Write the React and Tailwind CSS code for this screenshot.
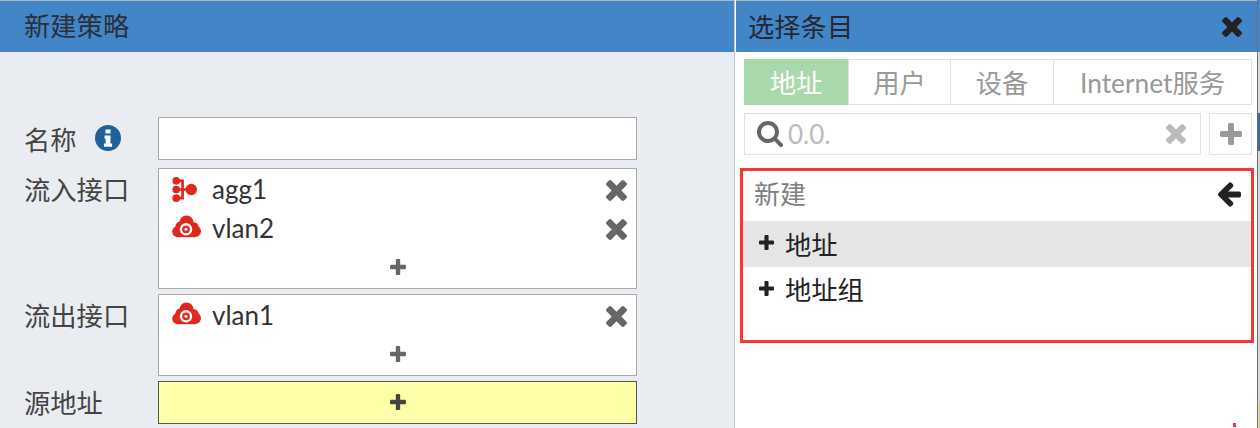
// font-awesome 4 glyphs, the package versions are a different, thinner cut
const TIMES = "M1298 1322q0 40-28 68l-136 136q-28 28-68 28t-68-28l-294-294-294 294q-28 28-68 28t-68-28l-136-136q-28-28-28-68t28-68l294-294-294-294q-28-28-28-68t28-68l136-136q28-28 68-28t68 28l294 294 294-294q28-28 68-28t68 28l136 136q28 28 28 68t-28 68l-294 294 294 294q28 28 28 68z";
const PLUS = "M1408 736v192q0 40-28 68t-68 28h-416v416q0 40-28 68t-68 28h-192q-40 0-68-28t-28-68v-416h-416q-40 0-68-28t-28-68v-192q0-40 28-68t68-28h416v-416q0-40 28-68t68-28h192q40 0 68 28t28 68v416h416q40 0 68 28t28 68z";
const ARROW = "M1536 832v128q0 53-32.5 90.5t-84.5 37.5h-704l293 294q38 36 38 90t-38 90l-75 76q-37 37-90 37-52 0-91-37l-651-652q-37-37-37-90 0-52 37-91l651-650q38-38 91-38 52 0 90 38l75 74q38 38 38 91t-38 91l-293 293h704q52 0 84.5 37.5t32.5 90.5z";
const SEARCH = "M1152 832q0-185-131.5-316.5t-316.5-131.5-316.5 131.5-131.5 316.5 131.5 316.5 316.5 131.5 316.5-131.5 131.5-316.5zm512 832q0 52-38 90t-90 38q-54 0-90-38l-343-342q-179 124-399 124-143 0-273.5-55.5t-225-150-150-225-55.5-273.5 55.5-273.5 150-225 225-150 273.5-55.5 273.5 55.5 225 150 150 225 55.5 273.5q0 220-124 399l343 343q37 37 37 90z";

function Glyph({ d, box, className }) {
    return (
        <svg viewBox={box} className={className} fill="currentColor">
            <path d={d} />
        </svg>
    );
}

const TimesIcon = ({ className }) => <Glyph d={TIMES} box="110 366 1188 1188" className={className} />;
const PlusIcon = ({ className }) => <Glyph d={PLUS} box="0 128 1408 1408" className={className} />;

function InfoIcon() {
    return (
        <svg viewBox="0 0 26 26" className="ml-[18px] -mt-[2px] w-[26px] h-[26px]">
            <circle cx="13" cy="13" r="13" fill="#1f6298" />
            <path d="M10.5 4.5h5v4h-5zM9.5 10.5h6v8h1.6v3.2H9v-3.2h1.7v-4.8H9.5z" fill="#fff" />
        </svg>
    );
}

function TreeIcon() {
    return (
        <svg viewBox="0 0 26 26" className="-mt-[3px] w-[25px] h-[25px] text-[#e0281e]" fill="currentColor">
            <circle cx="4.4" cy="4" r="4" />
            <circle cx="4.4" cy="13" r="4" />
            <circle cx="4.4" cy="22" r="4" />
            <circle cx="20" cy="13" r="6" />
            <path d="M4 2.6h8.4v9H16v2.8h-3.6v9H4v-2.8h5.6v-6.2H4v-2.8h5.6V5.4H4z" />
        </svg>
    );
}

function CloudIcon() {
    return (
        <svg viewBox="0 0 30 23" className="-mt-[6px] w-[29px] h-[23px] text-[#e0281e]" fill="currentColor">
            <circle cx="15" cy="7.4" r="7.2" />
            <circle cx="8.6" cy="11.4" r="5" />
            <circle cx="22" cy="12.4" r="5.6" />
            <circle cx="6" cy="16.8" r="5.8" />
            <circle cx="24" cy="16.4" r="6" />
            <rect x="6" y="12" width="18" height="10.6" />
            <circle cx="14.5" cy="14.4" r="6.4" fill="#fff" />
            <circle cx="14.5" cy="14.4" r="4" fill="#e0281e" />
            <circle cx="14.5" cy="14.4" r="1.6" fill="#fff" />
        </svg>
    );
}

function Chip({ icon, name }) {
    return (
        <div className="flex items-center h-[39px] pl-[13px] pr-[9px]">
            <div className="w-[40px] flex items-center">{icon}</div>
            <span className="text-[26px] text-[#333] leading-none -mt-[4px]">{name}</span>
            <TimesIcon className="ml-auto text-[#666] w-[21px] h-[21px]" />
        </div>
    );
}

function AddRow({ className }) {
    return (
        <div className={`flex justify-center ${className}`}>
            <PlusIcon className="text-[#666] w-[16px] h-[16px]" />
        </div>
    );
}

function Row({ label, info, className, children }) {
    return (
        <div className={`flex ${className}`}>
            <div className="w-[158px] pl-[24px] flex items-center h-[44px] text-[26.3px] text-[#444]">
                <span className={info ? "pt-[3px]" : "pt-[2px]"}>{label}</span>
                {info && <InfoIcon />}
            </div>
            <div className="w-[479px]">{children}</div>
        </div>
    );
}

export default function App() {
    return (
        <div className="relative w-[1260px] h-[428px] overflow-hidden flex bg-white font-['Lato','Noto_Sans_CJK_SC',sans-serif]">
            {/* left panel */}
            <div className="w-[734px] h-full bg-[#e9ecf0] flex flex-col">
                <div className="h-[52px] bg-[#4286c8] border-t border-[#b5b5b5] pl-[24px] flex items-center text-[26.3px] text-[#2b2f3a]">
                    新建策略
                </div>
                <div className="pt-[65px] flex flex-col">
                    <Row label="名称" info>
                        <div className="h-[43px] bg-white border border-[#aaa]" />
                    </Row>
                    <Row label="流入接口" className="mt-[7px]">
                        <div className="h-[121px] bg-white border border-[#aaa] pt-[2px]">
                            <Chip icon={<TreeIcon />} name="agg1" />
                            <Chip icon={<CloudIcon />} name="vlan2" />
                            <AddRow className="mt-[10px]" />
                        </div>
                    </Row>
                    <Row label="流出接口" className="mt-[5px]">
                        <div className="h-[82px] bg-white border border-[#aaa] pt-[2px]">
                            <Chip icon={<CloudIcon />} name="vlan1" />
                            <AddRow className="mt-[10px]" />
                        </div>
                    </Row>
                    <Row label="源地址" className="mt-[5px]">
                        <div className="h-[43px] bg-[#ffffa8] border border-[#555] flex items-center justify-center">
                            <PlusIcon className="text-[#444] w-[16px] h-[16px] -mt-[2px]" />
                        </div>
                    </Row>
                </div>
            </div>

            {/* right panel */}
            <div className="w-[2px] h-full flex flex-col">
                <div className="w-[1px] h-full bg-[#c4c7cc]" />
            </div>
            <div className="w-[521px] h-full flex flex-col">
                <div className="h-[52px] bg-[#4286c8] border-t border-[#b5b5b5] pl-[12px] pr-[12px] flex items-center justify-between text-[26.3px] text-[#26282e]">
                    <span className="mt-[2px]">选择条目</span>
                    <TimesIcon className="text-[#222] w-[20px] h-[20px] mr-[3px]" />
                </div>
                <div className="pl-[8px] pr-[5px] pt-[7px]">
                    <div className="h-[46px] flex border border-[#e2e2e2] text-[26.3px] text-[#999]">
                        <div className="w-[104px] -ml-px -my-px bg-[#a8d8ab] text-white flex items-center justify-center pt-[3px]">地址</div>
                        <div className="w-[102px] border-l border-[#e2e2e2] flex items-center justify-center pt-[3px]">用户</div>
                        <div className="w-[103px] border-l border-[#e2e2e2] flex items-center justify-center pt-[3px]">设备</div>
                        <div className="flex-1 border-l border-[#e2e2e2] flex items-center justify-center pt-[3px]">Internet服务</div>
                    </div>
                    <div className="mt-[8px] flex justify-between">
                        <div className="w-[457px] h-[42px] border border-[#e2e2e2] flex items-center pl-[12px] pr-[14px]">
                            <Glyph d={SEARCH} box="0 128 1664 1664" className="text-[#666] w-[26px] h-[26px]" />
                            <span className="ml-[5px] text-[26px] text-[#bbb]">0.0.</span>
                            <TimesIcon className="ml-auto text-[#bbb] w-[20px] h-[20px]" />
                        </div>
                        <div className="w-[43px] h-[42px] border border-[#e2e2e2] flex items-center justify-center">
                            <PlusIcon className="text-[#999] w-[22px] h-[22px]" />
                        </div>
                    </div>
                </div>
                <div className="ml-[4px] mr-[3px] mt-[13px] h-[175px] border-[3px] border-[#f93535]">
                    <div className="h-[50px] pl-[11px] pr-[10px] flex items-center justify-between text-[26px] text-[#808080]">
                        <span className="-mt-[4px]">新建</span>
                        <Glyph d={ARROW} box="0 117 1536 1558" className="text-[#222] w-[24px] h-[25px] -mt-[4px]" />
                    </div>
                    <div className="h-[46px] bg-[#e5e5e5] pl-[16px] flex items-center text-[26.3px] text-[#222]">
                        <PlusIcon className="w-[15px] h-[15px] mr-[11px] -mt-[4px]" />
                        <span className="pt-[4px]">地址</span>
                    </div>
                    <div className="h-[46px] pl-[16px] flex items-center text-[26.3px] text-[#222]">
                        <PlusIcon className="w-[15px] h-[15px] mr-[11px] -mt-[4px]" />
                        <span className="pt-[2px]">地址组</span>
                    </div>
                </div>
            </div>

            {/* sliver of the page behind */}
            <div className="w-[3px] h-full flex flex-col border-l border-[#6f6f6f] bg-[#d6d8dc]">
                <div className="h-[52px] bg-[#4286c8]" />
                <div className="h-[61px]" />
                <div className="h-[38px] bg-[#2f6da5]" />
                <div className="h-[254px]" />
                <div className="flex-1 bg-[#dcdc9a]" />
            </div>

            <div className="absolute left-[1233px] top-[423px] w-[3px] h-[4px] bg-[#f93535]" />
        </div>
    );
}
